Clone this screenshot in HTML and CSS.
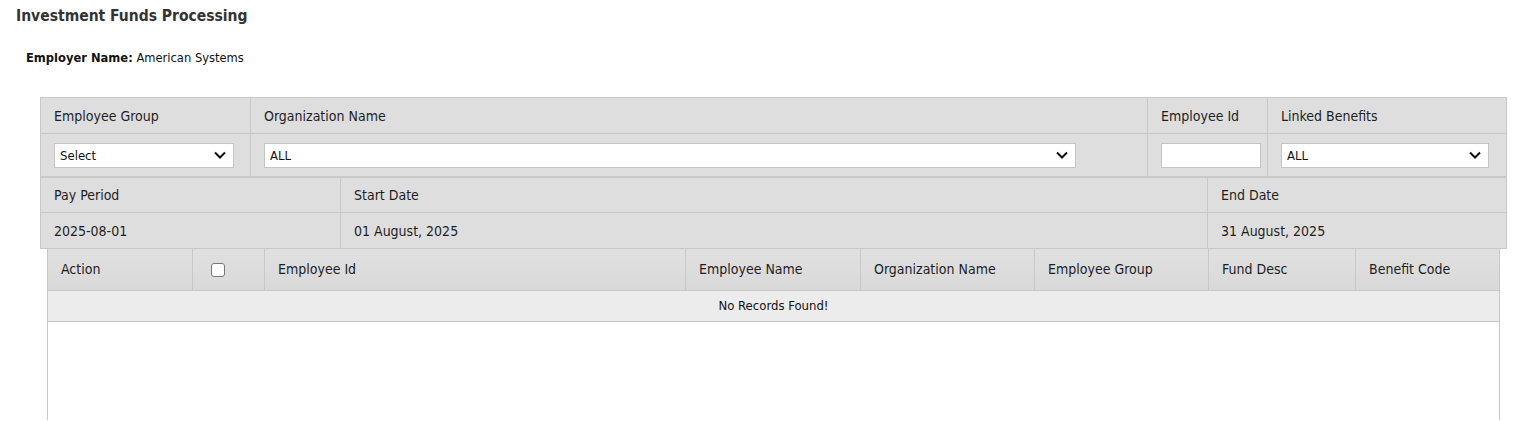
FILE: index.html
```html
<!DOCTYPE html>
<html lang="en">
<head>
<meta charset="utf-8">
<title>Investment Funds Processing</title>
<link rel="stylesheet" href="styles.css">
</head>
<body>
<div class="page">
  <h1 class="title">Investment Funds Processing</h1>
  <p class="employer"><b>Employer Name:</b> American Systems</p>

  <div class="panel">
    <table class="filters">
      <colgroup><col class="c-grp"><col><col class="c-eid"><col class="c-lb"></colgroup>
      <tr class="hrow top">
        <td>Employee Group</td>
        <td>Organization Name</td>
        <td>Employee Id</td>
        <td>Linked Benefits</td>
      </tr>
      <tr class="irow">
        <td><div class="select w-grp"><span>Select</span><svg width="12" height="8" viewBox="0 0 12 8"><path d="M1 1.5 6 6.5 11 1.5" fill="none" stroke="#111" stroke-width="2"/></svg></div></td>
        <td><div class="select w-org"><span>ALL</span><svg width="12" height="8" viewBox="0 0 12 8"><path d="M1 1.5 6 6.5 11 1.5" fill="none" stroke="#111" stroke-width="2"/></svg></div></td>
        <td><div class="input w-eid"></div></td>
        <td><div class="select w-lb"><span>ALL</span><svg width="12" height="8" viewBox="0 0 12 8"><path d="M1 1.5 6 6.5 11 1.5" fill="none" stroke="#111" stroke-width="2"/></svg></div></td>
      </tr>
    </table>
    <table class="period">
      <colgroup><col class="c-pp"><col><col class="c-ed"></colgroup>
      <tr class="hrow">
        <td>Pay Period</td>
        <td>Start Date</td>
        <td>End Date</td>
      </tr>
      <tr class="hrow top">
        <td>2025-08-01</td>
        <td>01 August, 2025</td>
        <td>31 August, 2025</td>
      </tr>
    </table>
  </div>

  <div class="grid">
    <table class="gtable">
      <colgroup>
        <col style="width:145px"><col style="width:72px"><col style="width:421px"><col style="width:175px">
        <col style="width:174px"><col style="width:174px"><col style="width:147px"><col>
      </colgroup>
      <thead>
        <tr>
          <th>Action</th>
          <th class="chk"><span class="checkbox"></span></th>
          <th>Employee Id</th>
          <th>Employee Name</th>
          <th>Organization Name</th>
          <th>Employee Group</th>
          <th>Fund Desc</th>
          <th>Benefit Code</th>
        </tr>
      </thead>
      <tbody>
        <tr class="empty"><td colspan="8">No Records Found!</td></tr>
      </tbody>
    </table>
    <div class="gbody"></div>
  </div>
</div>
</body>
</html>
```
FILE: styles.css
```css
* { box-sizing: border-box; }
html, body { margin: 0; padding: 0; background: #fff; }
body {
  font-family: "DejaVu Sans Condensed", "DejaVu Sans", sans-serif;
  color: #1e1e1e;
  font-size: 14px;
}
.page { padding: 6px 0 0 16px; }
.title {
  margin: 0;
  font-size: 15.5px;
  font-weight: bold;
  color: #333;
  line-height: 20px;
}
.employer {
  margin: 24px 0 0 10px;
  font-size: 12.8px;
  line-height: 16px;
  color: #111;
}
.panel {
  margin: 31px 0 0 24px;
  width: 1467px;
}
.panel table {
  width: 100%;
  border-collapse: collapse;
  table-layout: fixed;
  background: #dedede;
  border: 1px solid #c8c8c8;
}
.panel td {
  border: 1px solid #c8c8c8;
  padding: 0 0 0 13px;
  white-space: nowrap;
}
.filters .c-grp { width: 210px; }
.filters .c-eid { width: 120px; }
.filters .c-lb { width: 239px; }
.period .c-pp { width: 300px; }
.period .c-ed { width: 299px; }
.panel .hrow td { height: 35px; }
.panel .hrow.top td { height: 36px; }
.panel .irow td { height: 43px; }
.select, .input {
  height: 25px;
  background: #fff;
  border: 1px solid #c4c4c4;
  display: flex;
  align-items: center;
  justify-content: space-between;
  padding: 0 7px 0 5px;
  font-size: 13px;
  color: #111;
}
.w-grp { width: 180px; }
.w-org { width: 812px; }
.w-eid { width: 100px; }
.w-lb { width: 208px; }

.grid {
  margin-left: 31px;
  width: 1453px;
}
.gtable {
  width: 100%;
  border-collapse: collapse;
  table-layout: fixed;
}
.gtable th {
  background: linear-gradient(#e0e0e0, #d9d9d9);
  border: 1px solid #c8c8c8;
  border-top: none;
  height: 41px;
  text-align: left;
  font-weight: normal;
  padding: 0 0 0 13px;
  white-space: nowrap;
}
.gtable th.chk { padding: 0 0 0 18px; }
.checkbox {
  display: inline-block;
  width: 14px;
  height: 14px;
  border: 1px solid #777;
  border-radius: 3px;
  background: #fff;
  vertical-align: middle;
}
.empty td {
  background: #ececec;
  border: 1px solid #c8c8c8;
  height: 31px;
  text-align: center;
  font-size: 13px;
  color: #111;
}
.gbody {
  height: 98px;
  border-left: 1px solid #c8c8c8;
  border-right: 1px solid #c8c8c8;
}
```
